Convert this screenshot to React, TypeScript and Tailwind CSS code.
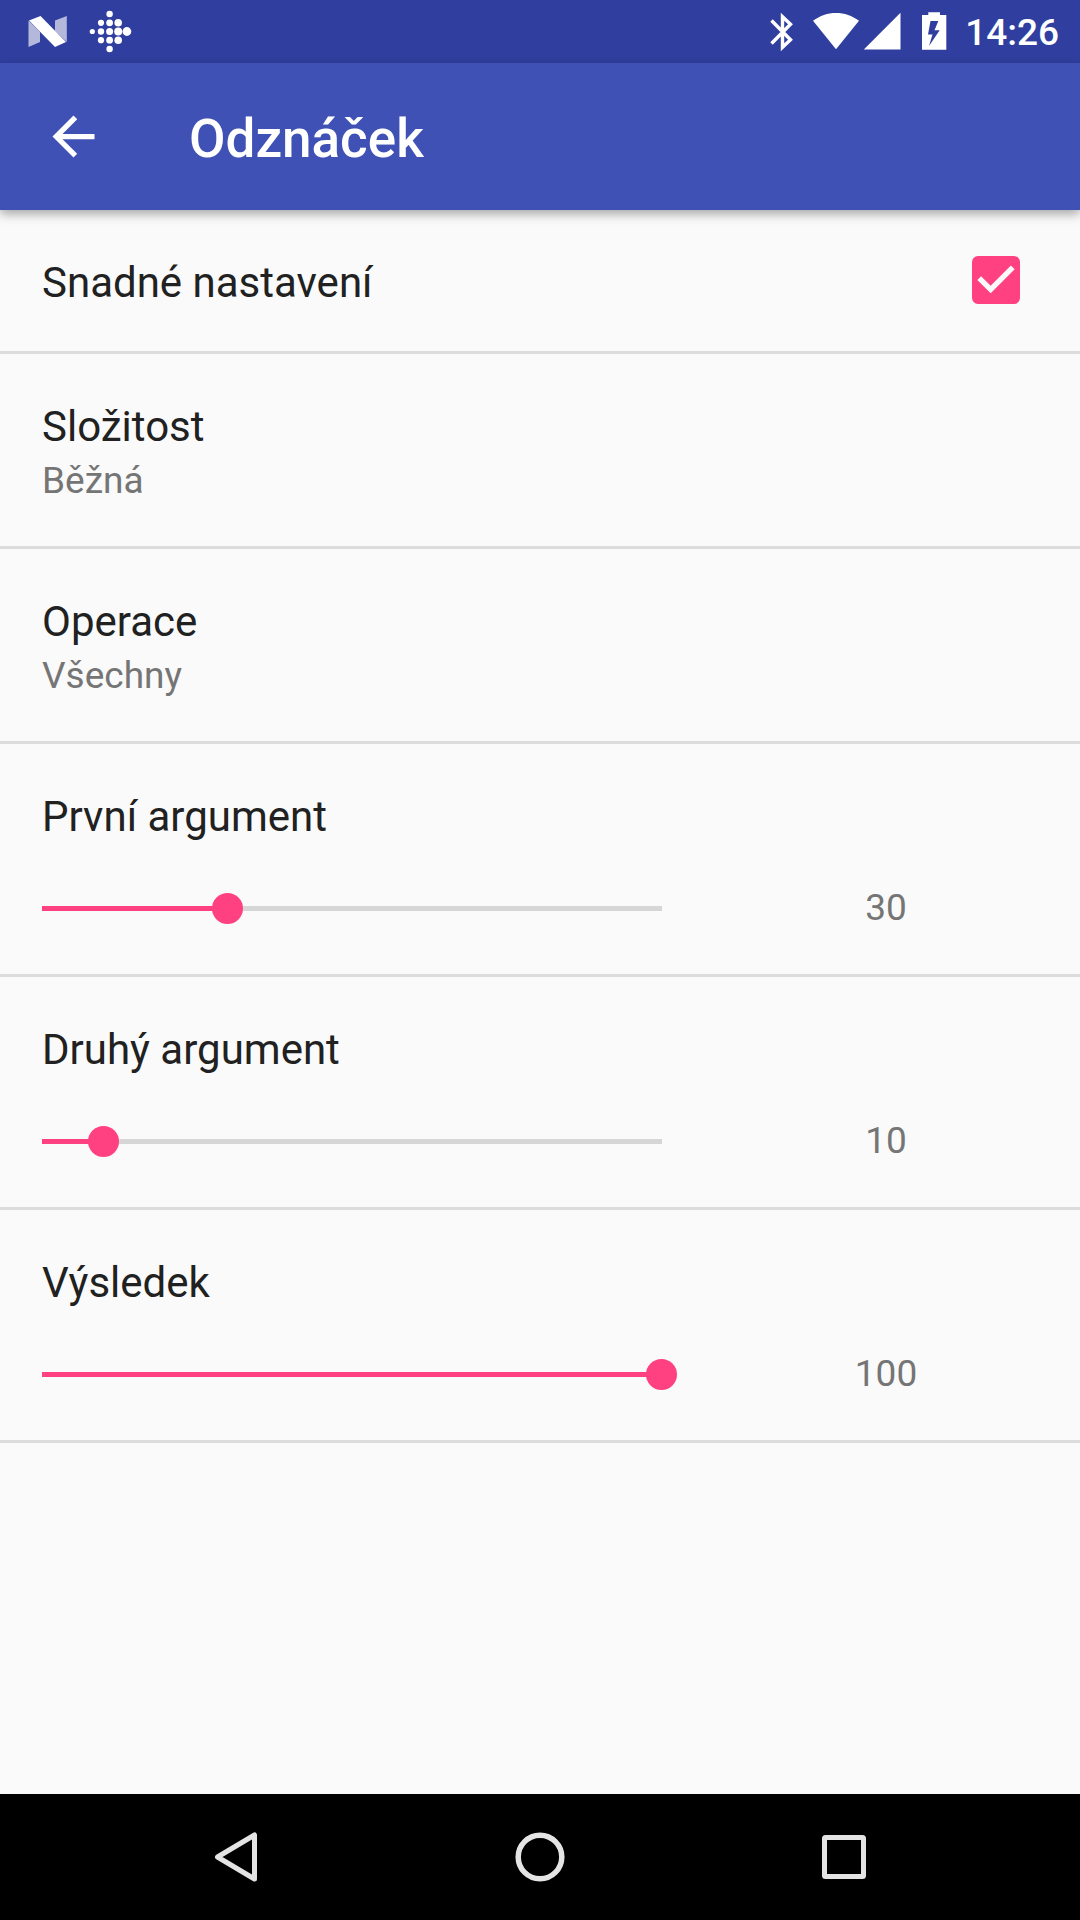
import { useState } from "react";

const ROW = "border-b-3 border-[#dcdcdc]";
const PRIMARY = "text-[42px] leading-[54px] text-[#212121]";
const SECONDARY = "text-[37px] leading-[54px] text-[#757575]";

function NougatIcon() {
  return (
    <svg viewBox="28 0 40 63" className="h-[63px] w-10" fill="#fff" aria-hidden="true">
      <path d="M28.5 20.5 L40 32 V42 L28.5 47Z" opacity=".64" />
      <path d="M55 20.500 L66.800 16 V42 L55 31Z" opacity=".64" />
      <path d="M29 20.500 L40.500 16 L66 42 L55 47Z" />
    </svg>
  );
}

const DOTS = [
  [92.3, 31.5, 2.6],
  [101, 22.8, 3.1],
  [101, 31.5, 3.2],
  [101, 40.2, 3.1],
  [109.6, 14, 3.2],
  [109.6, 22.8, 3.4],
  [109.6, 31.5, 3.5],
  [109.6, 40.2, 3.4],
  [109.6, 49, 3.2],
  [118.2, 22.8, 3.8],
  [118.2, 31.5, 4],
  [118.2, 40.2, 3.8],
  [126.9, 31.5, 4.4],
];

function FitbitIcon() {
  return (
    <svg viewBox="89 0 43 63" className="h-[63px] w-[43px]" fill="#fff" aria-hidden="true">
      {DOTS.map(([x, y, r]) => (
        <circle key={`${x}-${y}`} cx={x} cy={y} r={r} />
      ))}
    </svg>
  );
}

function StatusBar() {
  return (
    <div className="flex h-[63px] items-center justify-between bg-[#303f9f] pr-[21px] pl-7">
      <div className="flex gap-[21px]">
        <NougatIcon />
        <FitbitIcon />
      </div>
      <div className="flex items-center">
        <svg viewBox="770 0 24 63" className="mr-[18px] h-[63px] w-6" fill="none" stroke="#fff" strokeWidth="3.4" aria-hidden="true">
          <path d="M771.500 20.500 L790.500 39.700 L782.500 47.300 V16.700 L790.500 24.300 L771.500 43.500" />
        </svg>
        <svg viewBox="812 0 48 63" className="mr-[3px] h-[63px] w-12" fill="#fff" aria-hidden="true">
          <path d="M836 49.200 L813 20.700 C820 15.500 827.500 12.900 836 12.900 S852 15.500 859 20.700Z" />
        </svg>
        <svg viewBox="863 0 39 63" className="mr-[19px] h-[63px] w-[39px]" fill="#fff" aria-hidden="true">
          <path d="M863.800 49.500 H900.500 V12.800Z" />
        </svg>
        <svg viewBox="921 0 27 63" className="mr-[17px] h-[63px] w-[27px]" fill="#fff" fillRule="evenodd" aria-hidden="true">
          <path d="M922 15 H928.300 V12.200 H940 V15 H946.300 V49.800 H922Z M930.500 21 L928 34.500 H932.500 L929 46 L939.700 30.200 H934.500 L938.300 21Z" />
        </svg>
        <time className="pt-0.5 text-[37px] leading-[61px] font-medium text-white">14:26</time>
      </div>
    </div>
  );
}

function AppBar() {
  return (
    <header className="relative z-10 flex h-[147px] items-center gap-[84px] bg-[#3f51b5] pl-[42px] text-white shadow-[0_4px_10px_rgba(0,0,0,0.34)]">
      <button type="button" aria-label="Zpět" className="size-[63px]">
        <svg viewBox="0 0 24 24" className="size-full" fill="currentColor" aria-hidden="true">
          <path d="M20 11H7.830l5.590-5.590L12 4l-8 8 8 8 1.410-1.410L7.830 13H20v-2z" />
        </svg>
      </button>
      <h1 className="pt-1 text-[53px] leading-[62px] font-medium">Odznáček</h1>
    </header>
  );
}

function CheckRow({ label }: { label: string }) {
  const [checked, setChecked] = useState(true);
  return (
    <label className={`${ROW} flex items-start justify-between pt-[46px] pr-[60px] pb-[41px] pl-[42px]`}>
      <span className={PRIMARY}>{label}</span>
      <span className="grid size-12">
        <input
          type="checkbox"
          checked={checked}
          onChange={(e) => setChecked(e.target.checked)}
          className="col-start-1 row-start-1 size-12 appearance-none rounded-md border-5 border-[#757575] checked:border-[#ff4081] checked:bg-[#ff4081]"
        />
        {checked && (
          <svg viewBox="3 3 18 18" className="pointer-events-none col-start-1 row-start-1 size-12" fill="#fafafa" aria-hidden="true">
            <path d="M10 17l-5-5 1.410-1.410L10 14.170l7.590-7.590L19 8l-9 9z" />
          </svg>
        )}
      </span>
    </label>
  );
}

function ChoiceRow({ label, value }: { label: string; value: string }) {
  return (
    <button type="button" className={`${ROW} flex flex-col items-start px-[42px] pt-[46px] pb-[38px] text-left`}>
      <span className={PRIMARY}>{label}</span>
      <span className={SECONDARY}>{value}</span>
    </button>
  );
}

function SliderRow({ id, label, initial }: { id: string; label: string; initial: number }) {
  const [value, setValue] = useState(initial);
  return (
    <div className={`${ROW} flex flex-col gap-[37px] pt-[46px] pb-[39px] pl-[42px]`}>
      <label htmlFor={id} className={PRIMARY}>
        {label}
      </label>
      <div className="grid grid-cols-[155fr_97fr] items-center gap-[30px]">
        <div className="grid items-center">
          <div className="col-start-1 row-start-1 h-[5px] bg-[#d6d6d6]">
            <div className="h-full bg-[#ff4081]" style={{ width: `${value}%` }} />
          </div>
          <input
            id={id}
            type="range"
            min={0}
            max={100}
            value={value}
            onChange={(e) => setValue(Number(e.target.value))}
            className="col-start-1 row-start-1 -ml-4 h-[31px] w-[calc(100%+31px)] appearance-none bg-transparent [&::-webkit-slider-thumb]:size-[31px] [&::-webkit-slider-thumb]:appearance-none [&::-webkit-slider-thumb]:rounded-full [&::-webkit-slider-thumb]:bg-[#ff4081]"
          />
        </div>
        <output htmlFor={id} className={`${SECONDARY} text-center`}>
          {value}
        </output>
      </div>
    </div>
  );
}

function NavBar() {
  return (
    <nav className="mt-auto grid h-[126px] grid-cols-3 bg-black px-[84px]">
      <button type="button" aria-label="Zpět" className="grid place-items-center">
        <svg viewBox="0 0 54 54" className="size-[54px]" fill="none" stroke="#e4e4e4" strokeWidth="5" strokeLinejoin="round" aria-hidden="true">
          <path d="M8.500 27 L45.500 5 V49Z" />
        </svg>
      </button>
      <button type="button" aria-label="Domů" className="grid place-items-center">
        <svg viewBox="0 0 54 54" className="size-[54px]" fill="none" stroke="#e4e4e4" strokeWidth="5.500" aria-hidden="true">
          <circle cx="27" cy="27" r="21.800" />
        </svg>
      </button>
      <button type="button" aria-label="Přehled" className="grid place-items-center">
        <svg viewBox="0 0 54 54" className="size-[54px]" fill="none" stroke="#e4e4e4" strokeWidth="5" strokeLinejoin="round" aria-hidden="true">
          <rect x="7.500" y="7.500" width="39" height="39" rx="1" />
        </svg>
      </button>
    </nav>
  );
}

export default function App() {
  return (
    <div className="flex min-h-screen flex-col bg-[#fafafa] font-[Roboto,sans-serif]">
      <StatusBar />
      <AppBar />
      <main className="flex flex-col">
        <CheckRow label="Snadné nastavení" />
        <ChoiceRow label="Složitost" value="Běžná" />
        <ChoiceRow label="Operace" value="Všechny" />
        <SliderRow id="first-argument" label="První argument" initial={30} />
        <SliderRow id="second-argument" label="Druhý argument" initial={10} />
        <SliderRow id="result" label="Výsledek" initial={100} />
      </main>
      <NavBar />
    </div>
  );
}
